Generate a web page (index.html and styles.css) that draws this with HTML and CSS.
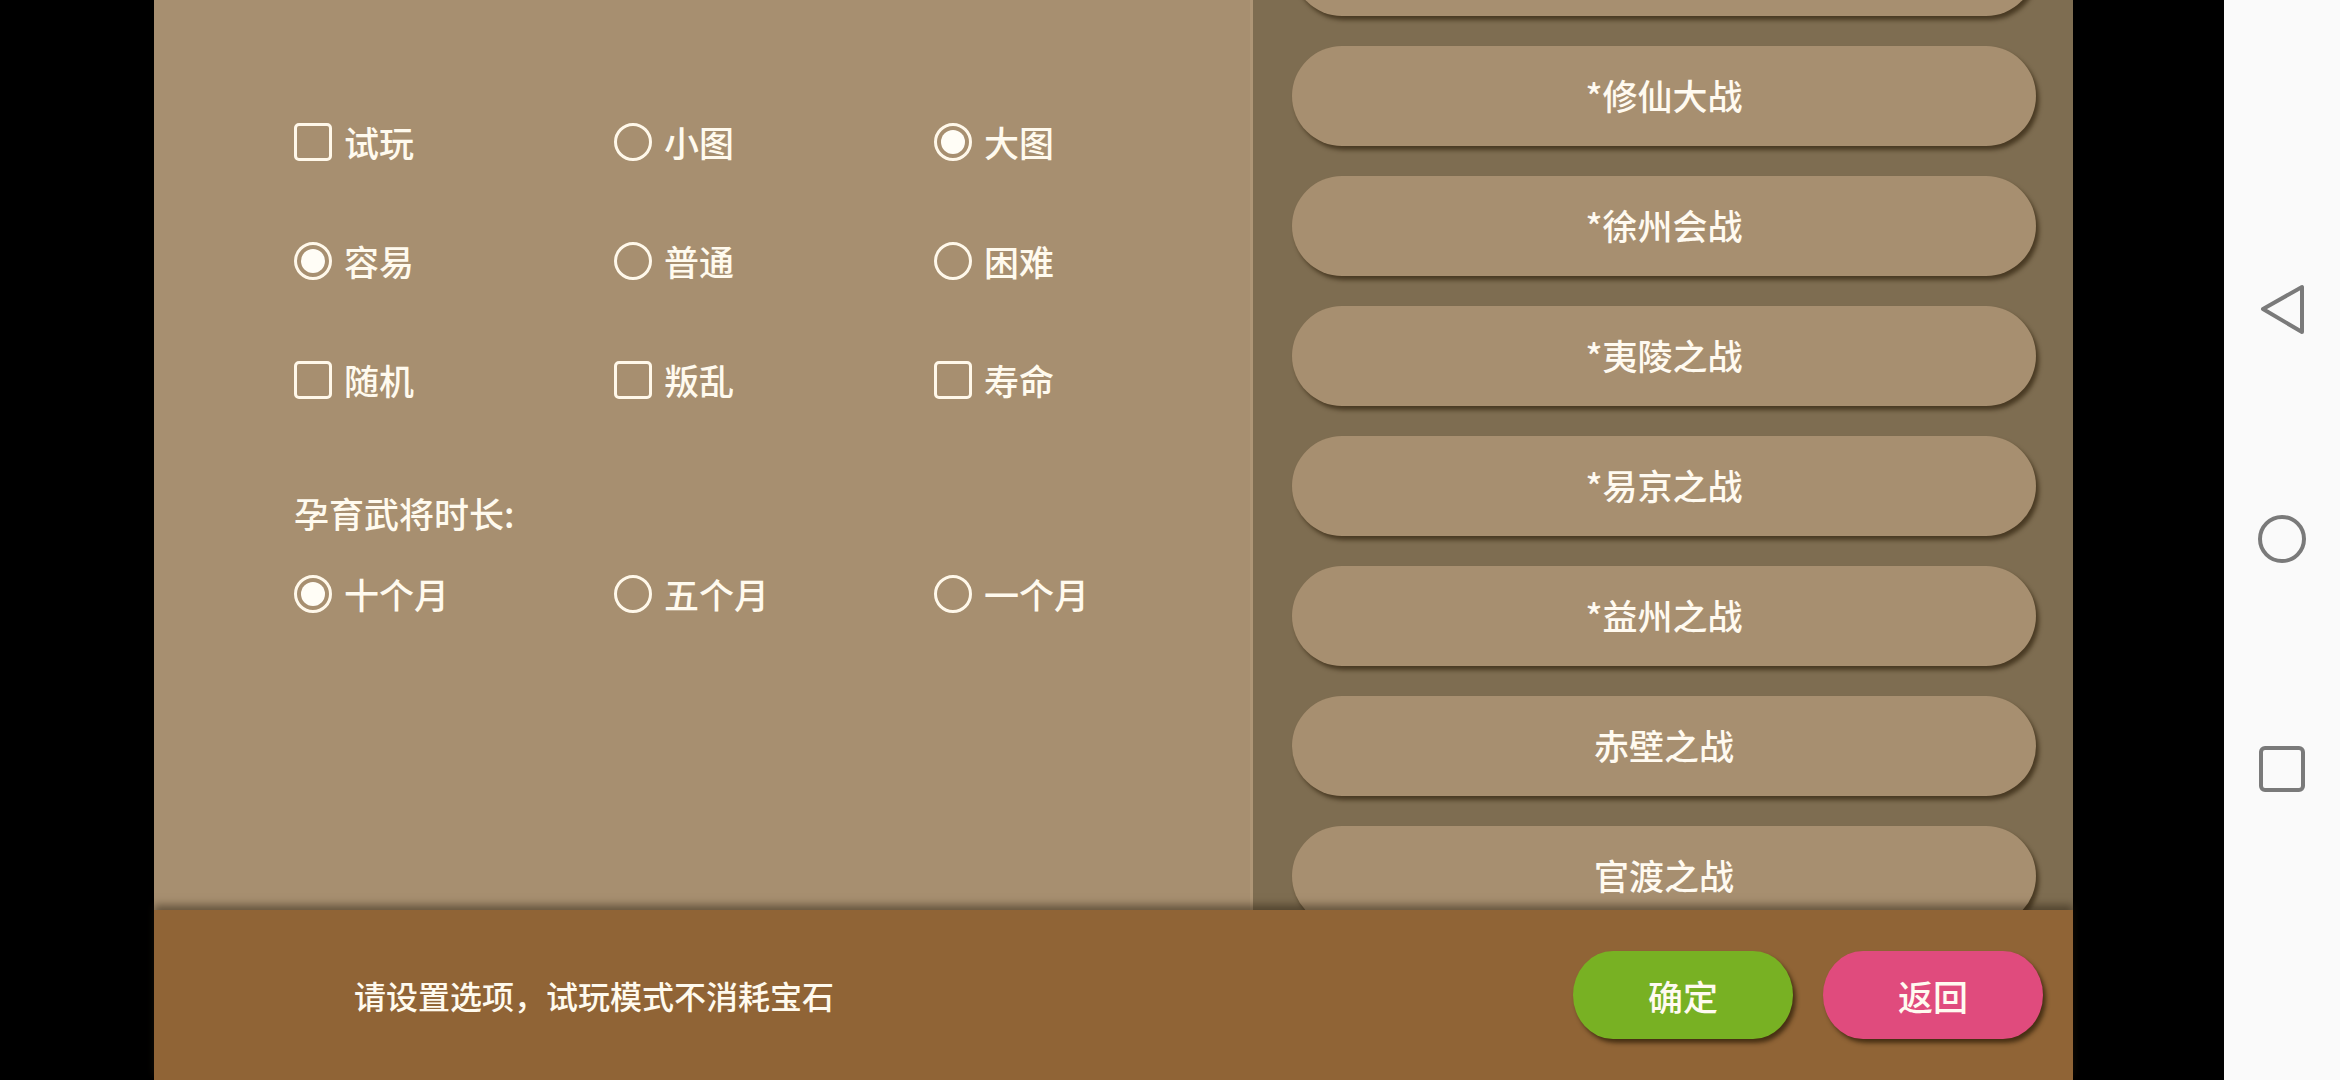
FILE: index.html
```html
<!DOCTYPE html>
<html lang="zh">
<head>
    <meta charset="UTF-8" />
    <title>设置</title>
    <link rel="stylesheet" href="styles.css">
</head>
<body>
    <div class="lado"></div>

    <div class="pantalla">
        <div class="contenido">
            <div class="opciones">
                <div class="fila">
                    <div class="item"><span class="caja"></span>试玩</div>
                    <div class="item"><span class="radio"></span>小图</div>
                    <div class="item"><span class="radio marcado"></span>大图</div>

                    <div class="item"><span class="radio marcado"></span>容易</div>
                    <div class="item"><span class="radio"></span>普通</div>
                    <div class="item"><span class="radio"></span>困难</div>

                    <div class="item"><span class="caja"></span>随机</div>
                    <div class="item"><span class="caja"></span>叛乱</div>
                    <div class="item"><span class="caja"></span>寿命</div>
                </div>

                <p class="etiqueta">孕育武将时长:</p>

                <div class="fila">
                    <div class="item"><span class="radio marcado"></span>十个月</div>
                    <div class="item"><span class="radio"></span>五个月</div>
                    <div class="item"><span class="radio"></span>一个月</div>
                </div>
            </div>

            <div class="lista">
                <div class="scroll">
                    <!-- el primero queda casi fuera por el scroll -->
                    <button class="mapa"></button>
                    <button class="mapa">*修仙大战</button>
                    <button class="mapa">*徐州会战</button>
                    <button class="mapa">*夷陵之战</button>
                    <button class="mapa">*易京之战</button>
                    <button class="mapa">*益州之战</button>
                    <button class="mapa">赤壁之战</button>
                    <button class="mapa">官渡之战</button>
                </div>
            </div>
        </div>

        <div class="pie">
            <p class="aviso">请设置选项，试玩模式不消耗宝石</p>
            <button class="boton verde">确定</button>
            <button class="boton rosa">返回</button>
        </div>
    </div>

    <div class="lado2"></div>

    <div class="nav">
        <svg width="50" height="50" viewBox="0 0 50 50"><path d="M6 25 L45 3 L45 48 Z" fill="none" stroke="#7a7a7a" stroke-width="4" stroke-linejoin="round"/></svg>
        <svg width="50" height="50" viewBox="0 0 50 50"><circle cx="25" cy="25" r="22" fill="none" stroke="#7a7a7a" stroke-width="4"/></svg>
        <svg width="50" height="50" viewBox="0 0 50 50"><rect x="4" y="4" width="42" height="42" rx="4" fill="none" stroke="#7a7a7a" stroke-width="4"/></svg>
    </div>
</body>
</html>
```

FILE: styles.css
```css
body {
    margin: 0;
    padding: 0;
    display: flex;
    width: 2340px;
    height: 1080px;
    overflow: hidden;
    background-color: #000;
    font-family: "Noto Sans CJK SC", "Noto Sans", sans-serif;
    font-weight: 500;
    color: #fffaee;
}

.lado {
    width: 154px;
    flex: none;
}
.lado2 {
    width: 151px;
    flex: none;
}

.pantalla {
    width: 1919px;
    flex: none;
    display: flex;
    flex-direction: column;
}

.contenido {
    height: 910px;
    display: flex;
}

.opciones {
    width: 1099px;
    flex: none;
    background-color: #a78f70;
    padding: 123px 0 0 140px;
    box-sizing: border-box;
    border-right: 3px solid #ae9676;
}

.fila {
    display: grid;
    grid-template-columns: repeat(3, 320px);
    row-gap: 81px;
}

.item {
    display: flex;
    align-items: center;
    gap: 12px;
    height: 38px;
    font-size: 35px;
    line-height: 38px;
}

.caja, .radio {
    width: 38px;
    height: 38px;
    box-sizing: border-box;
    border: 3px solid #fff8ea;
    flex: none;
    position: relative;
}
.caja {
    border-radius: 5px;
}
.radio {
    border-radius: 50%;
}
.marcado::after {
    content: "";
    position: absolute;
    inset: 4px;
    border-radius: 50%;
    background-color: #fffdf6;
}

.etiqueta {
    font-size: 35px;
    line-height: 38px;
    margin: 95px 0 43px;
}

.lista {
    flex: 1;
    background-color: #7e6d51;
    overflow: hidden;
    padding: 0 37px 0 39px;
}

.scroll {
    margin-top: -84px;
    display: flex;
    flex-direction: column;
    gap: 30px;
}

.mapa {
    height: 100px;
    padding-bottom: 5px;
    border: none;
    border-radius: 50px;
    background-color: #a78f70;
    color: #fffaf0;
    font-family: "Noto Sans CJK SC", "Noto Sans", sans-serif;
    font-weight: 500;
    font-size: 35px;
    box-shadow: 3px 4px 4px rgba(45, 30, 10, 0.65);
}

.pie {
    flex: 1;
    background-color: #906436;
    display: flex;
    align-items: center;
    padding: 0 30px 0 200px;
    gap: 30px;
    box-shadow: 0 -5px 8px rgba(40, 30, 15, 0.5);
    position: relative;
}

.aviso {
    flex: 1;
    margin: 0;
    font-size: 32px;
}

.boton {
    width: 220px;
    height: 88px;
    border: none;
    border-radius: 40px / 44px;
    color: #fffaf0;
    font-family: "Noto Sans CJK SC", "Noto Sans", sans-serif;
    font-weight: 500;
    font-size: 35px;
    box-shadow: 3px 4px 4px rgba(40, 25, 5, 0.7);
}
.verde {
    background-color: #78b123;
}
.rosa {
    background-color: #e04b7d;
}

.nav {
    width: 116px;
    flex: none;
    background-color: #fafafa;
    display: flex;
    flex-direction: column;
    align-items: center;
    padding-top: 284px;
    gap: 180px;
    box-sizing: border-box;
}
```
